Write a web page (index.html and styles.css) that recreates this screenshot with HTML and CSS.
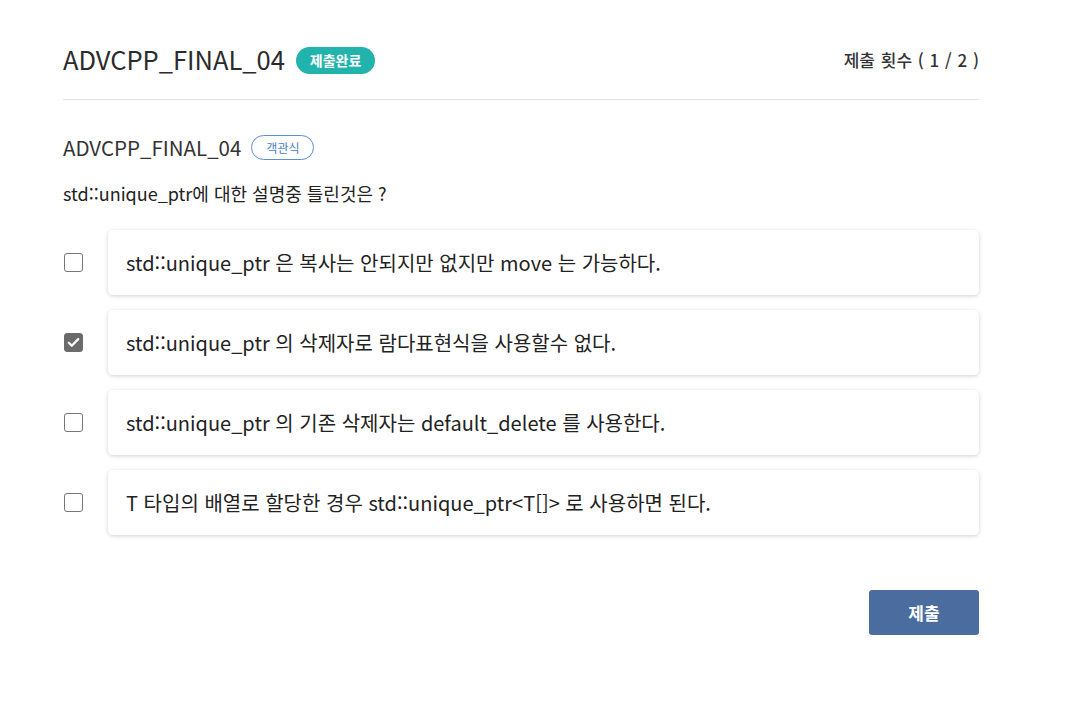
FILE: index.html
```html
<!DOCTYPE html>
<html lang="ko">
<head>
<meta charset="utf-8">
<link rel="stylesheet" href="styles.css">
</head>
<body>
<div class="page">
  <header class="header">
    <div class="title-wrap">
      <h1 class="title">ADVCPP_FINAL_04</h1>
      <span class="badge-done">제출완료</span>
    </div>
    <div class="count">제출 횟수 ( 1 / 2 )</div>
  </header>
  <section class="question">
    <div class="q-head">
      <h2 class="q-title">ADVCPP_FINAL_04</h2>
      <span class="badge-type">객관식</span>
    </div>
    <p class="q-text">std::unique_ptr에 대한 설명중 틀린것은 ?</p>
    <ul class="options">
      <li class="option">
        <span class="check"></span>
        <div class="card">std::unique_ptr 은 복사는 안되지만 없지만 move 는 가능하다.</div>
      </li>
      <li class="option">
        <span class="check checked"><svg viewBox="0 0 18 18" width="18" height="18"><path d="M4 9.2l3.2 3.2L14 5.4" fill="none" stroke="#fff" stroke-width="2.4" stroke-linecap="round" stroke-linejoin="round"/></svg></span>
        <div class="card">std::unique_ptr 의 삭제자로 람다표현식을 사용할수 없다.</div>
      </li>
      <li class="option">
        <span class="check"></span>
        <div class="card">std::unique_ptr 의 기존 삭제자는 default_delete 를 사용한다.</div>
      </li>
      <li class="option">
        <span class="check"></span>
        <div class="card">T 타입의 배열로 할당한 경우 std::unique_ptr&lt;T[]&gt; 로 사용하면 된다.</div>
      </li>
    </ul>
    <div class="actions">
      <button class="submit">제출</button>
    </div>
  </section>
</div>
</body>
</html>
```
FILE: styles.css
```css
* { box-sizing: border-box; }
body {
  margin: 0;
  background: #fff;
  font-family: "Noto Sans CJK KR", "Noto Sans", sans-serif;
  color: #333;
}
.page {
  width: 916px;
  margin-left: 63px;
  padding-top: 39px;
}
.header {
  display: flex;
  justify-content: space-between;
  align-items: center;
  padding-bottom: 20px;
  border-bottom: 1px solid #e3e3e3;
}
.title-wrap {
  display: flex;
  align-items: center;
  gap: 11px;
}
.title {
  margin: 0;
  font-size: 25.5px;
  font-weight: 400;
  color: #2b2b2b;
  line-height: 40px;
}
.badge-done {
  background: #23b3ad;
  color: #fff;
  font-size: 14px;
  font-weight: 700;
  border-radius: 14px;
  height: 27px;
  line-height: 27px;
  padding: 0 14px;
  margin-top: 3px;
}
.count {
  font-size: 17px;
  font-weight: 500;
  color: #333;
  word-spacing: 1px;
}
.question { padding-top: 32px; }
.q-head {
  display: flex;
  align-items: center;
  gap: 10px;
}
.q-title {
  margin: 0;
  font-size: 20.5px;
  font-weight: 400;
  color: #333;
  line-height: 30px;
}
.badge-type {
  border: 1px solid #5b8fd1;
  color: #4a82c8;
  font-size: 12px;
  border-radius: 13px;
  height: 25px;
  line-height: 23px;
  padding: 0 14px;
}
.q-text {
  margin: 18px 0 0;
  font-size: 18px;
  line-height: 26px;
  color: #222;
}
.options {
  list-style: none;
  margin: 24px 0 0;
  padding: 0;
  display: flex;
  flex-direction: column;
  gap: 15px;
}
.option {
  display: flex;
  align-items: center;
}
.check {
  width: 19px;
  height: 19px;
  border: 1px solid #777;
  border-radius: 3px;
  background: #fff;
  margin-left: 1px;
  margin-right: 25px;
  flex: none;
  display: flex;
  align-items: center;
  justify-content: center;
}
.check.checked {
  background: #6b6b6b;
  border-color: #6b6b6b;
}
.check svg { width: 17px; height: 17px; }
.card {
  flex: 1;
  height: 65px;
  display: flex;
  align-items: center;
  padding-left: 18px;
  background: #fff;
  border-radius: 5px;
  box-shadow: 0 1px 4px rgba(0,0,0,0.18);
  font-size: 20px;
  color: #222;
}
.actions {
  display: flex;
  justify-content: flex-end;
  margin-top: 55px;
}
.submit {
  width: 110px;
  height: 45px;
  border: none;
  border-radius: 3px;
  background: #4a6c9e;
  color: #fff;
  font-family: inherit;
  font-size: 17px;
  font-weight: 700;
}
```
